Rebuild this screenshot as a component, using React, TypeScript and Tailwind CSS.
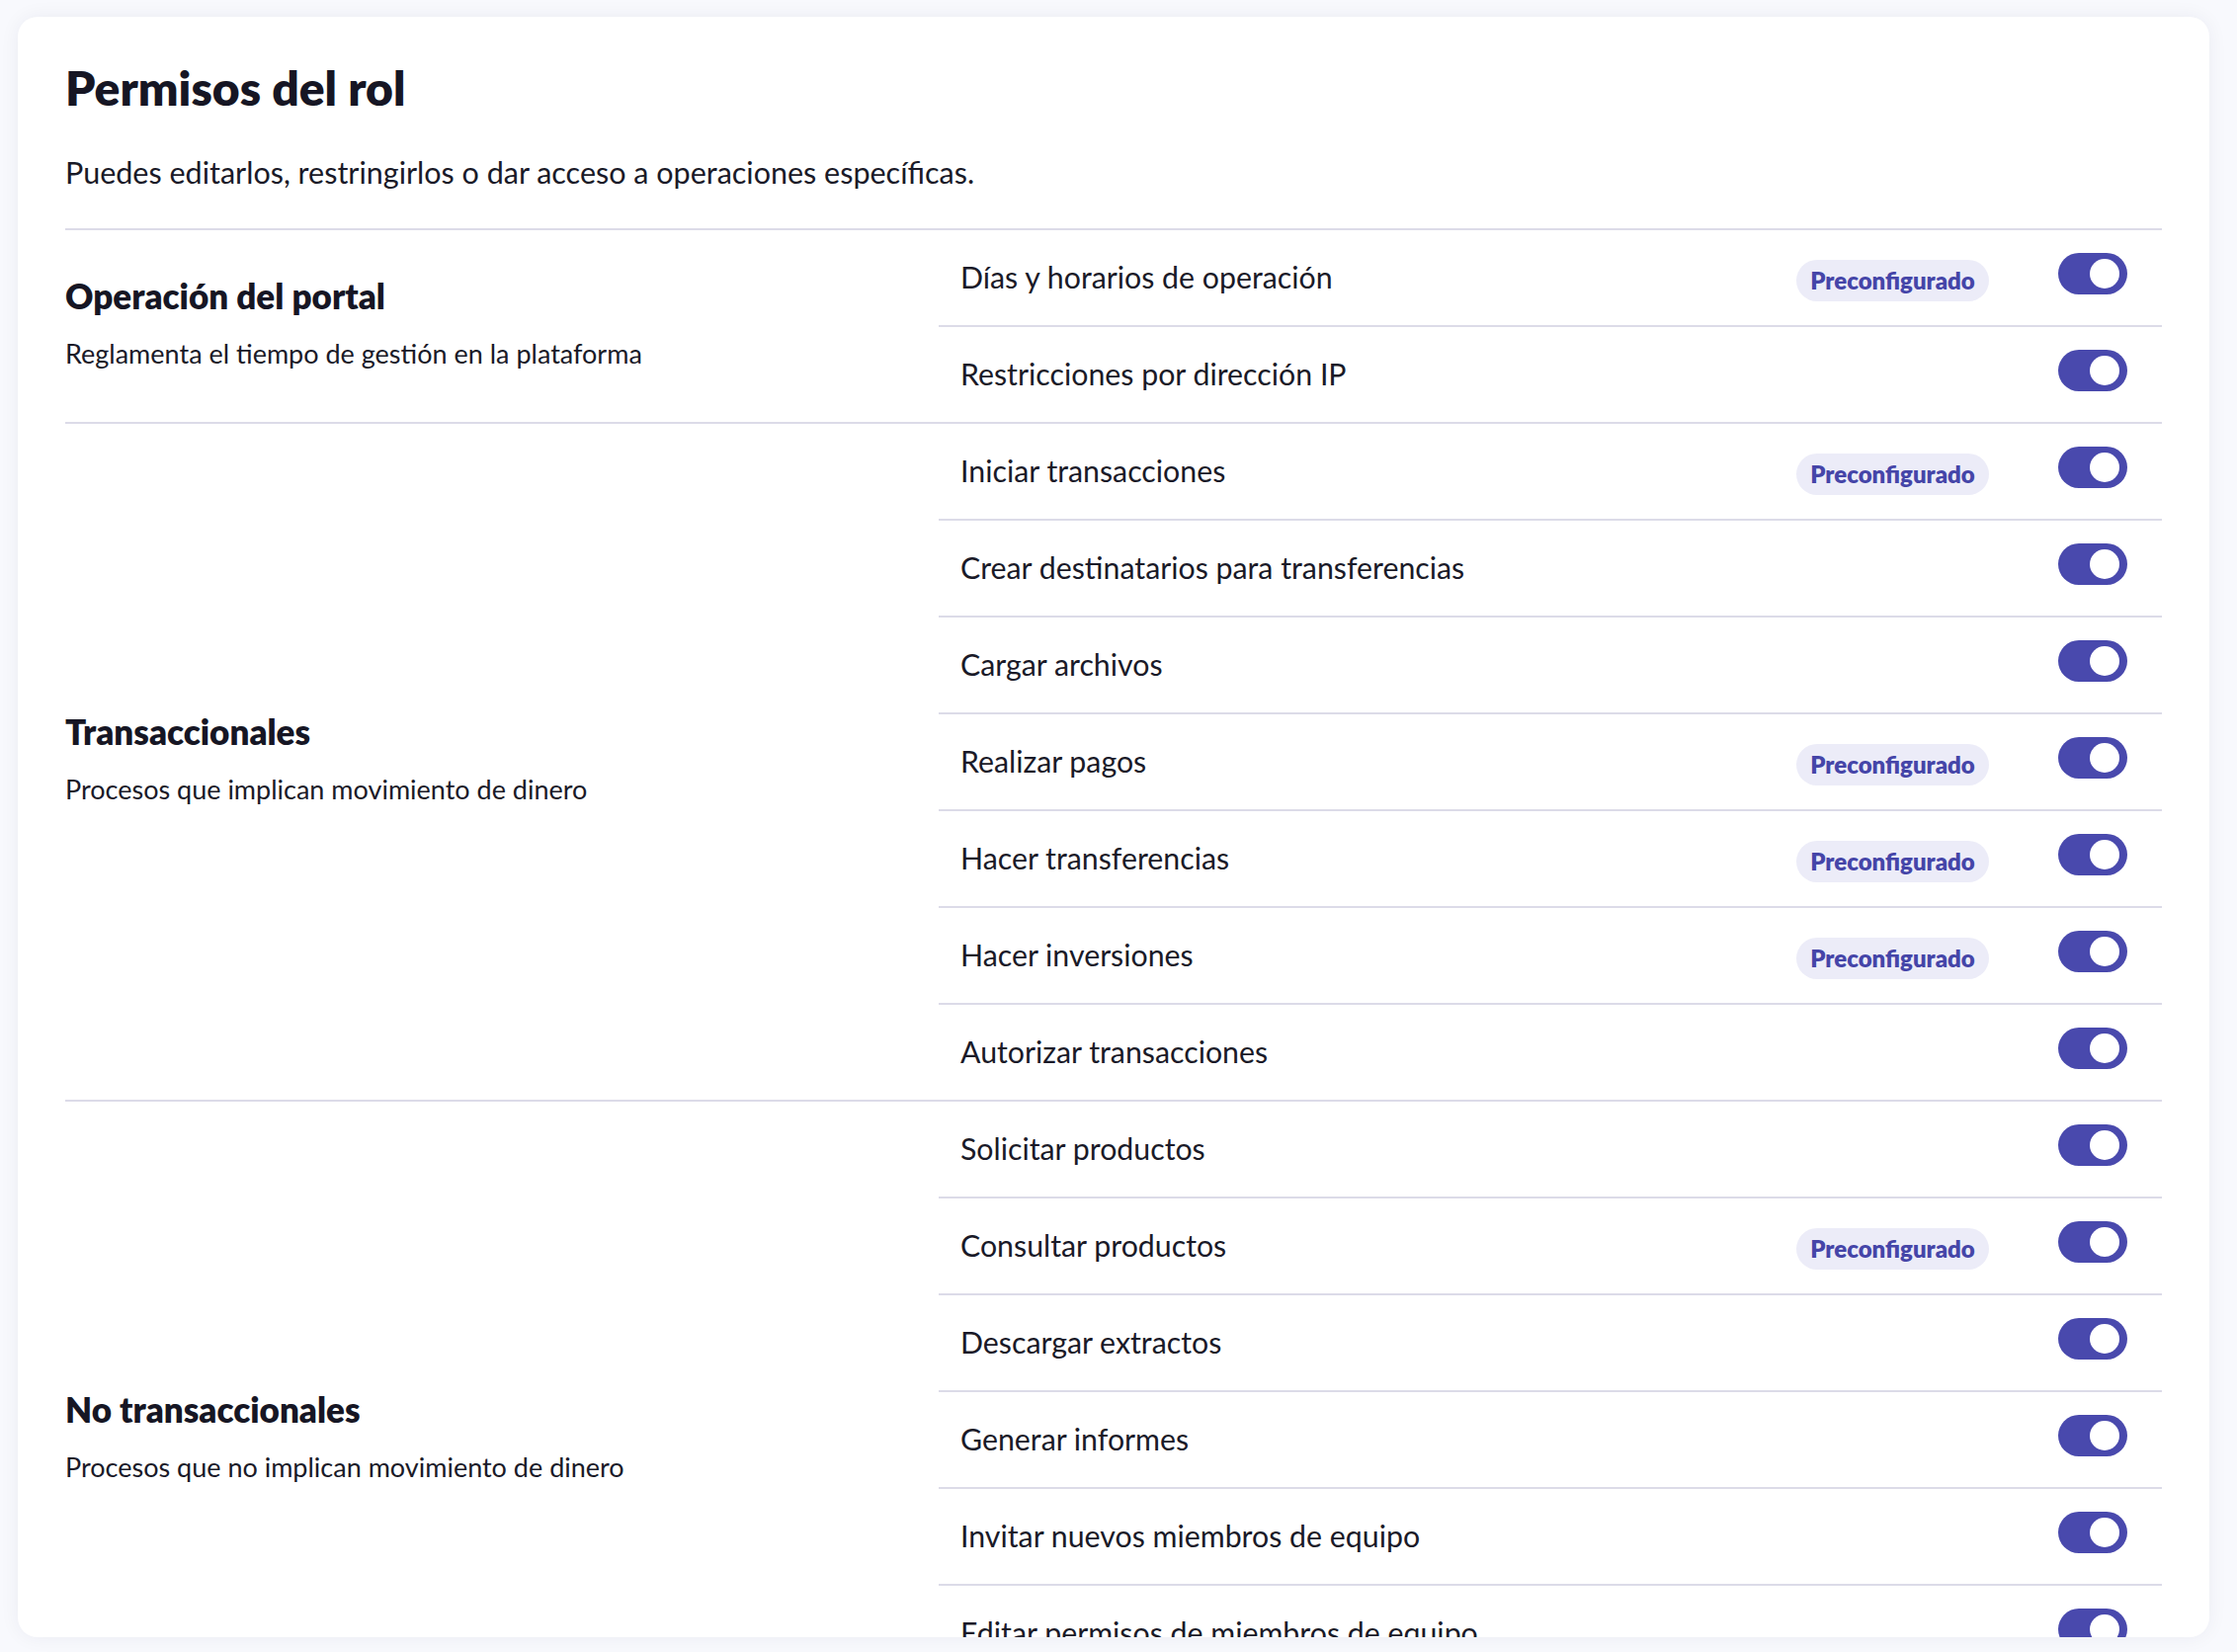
import React from "react";

type Row = { label: string; preset?: boolean };
type Section = { title: string; desc: string; rows: Row[] };

const sections: Section[] = [
  {
    title: "Operación del portal",
    desc: "Reglamenta el tiempo de gestión en la plataforma",
    rows: [
      { label: "Días y horarios de operación", preset: true },
      { label: "Restricciones por dirección IP" },
    ],
  },
  {
    title: "Transaccionales",
    desc: "Procesos que implican movimiento de dinero",
    rows: [
      { label: "Iniciar transacciones", preset: true },
      { label: "Crear destinatarios para transferencias" },
      { label: "Cargar archivos" },
      { label: "Realizar pagos", preset: true },
      { label: "Hacer transferencias", preset: true },
      { label: "Hacer inversiones", preset: true },
      { label: "Autorizar transacciones" },
    ],
  },
  {
    title: "No transaccionales",
    desc: "Procesos que no implican movimiento de dinero",
    rows: [
      { label: "Solicitar productos" },
      { label: "Consultar productos", preset: true },
      { label: "Descargar extractos" },
      { label: "Generar informes" },
      { label: "Invitar nuevos miembros de equipo" },
      { label: "Editar permisos de miembros de equipo" },
      { label: "Gestionar roles del equipo" },
    ],
  },
];

function Toggle() {
  return (
    <div className="relative mb-[9px] mr-[35px] h-[42px] w-[70px] shrink-0 rounded-full bg-[#4949ad]">
      <div className="absolute right-[8px] top-[6px] h-[30px] w-[30px] rounded-full bg-white" />
    </div>
  );
}

function Badge() {
  return (
    <span className="mr-[70px] mt-[5px] flex h-[42px] w-[195px] items-center justify-center rounded-full bg-[#ececf8] text-[24px] font-extrabold text-[#4545a8]">
      Preconfigurado
    </span>
  );
}

export default function App() {
  return (
    <div
      className="h-screen overflow-hidden bg-[#f8f9fd] pb-[15px] pl-[18px] pr-[28px] pt-[17px] text-[#1a1a28]"
      style={{ fontFamily: "Lato, 'Noto Sans', sans-serif" }}
    >
      <div className="h-full overflow-hidden rounded-[20px] bg-white px-[48px] shadow-[0_0_20px_rgba(20,20,60,0.06)]">
        <h1 className="pt-[44px] text-[48px] font-extrabold leading-[56px] text-[#161624]">Permisos del rol</h1>
        <p className="mt-[37px] text-[30.5px] leading-[40px]">
          Puedes editarlos, restringirlos o dar acceso a operaciones específicas.
        </p>
        <div className="mt-[37px] border-t-2 border-[#dcdbe8]">
          {sections.map((s) => (
            <div key={s.title} className="flex border-b-2 border-[#dcdbe8]">
              <div className="flex w-[884px] shrink-0 flex-col justify-center pb-[9px]">
                <h2 className="text-[35px] font-extrabold leading-[44px] text-[#161624]">{s.title}</h2>
                <p className="mt-[20px] text-[27px] leading-[34px]">{s.desc}</p>
              </div>
              <div className="flex-1">
                {s.rows.map((r, i) => (
                  <div
                    key={r.label}
                    className={
                      i < s.rows.length - 1
                        ? "flex h-[98px] items-center border-b-2 border-[#dcdbe8] pl-[22px]"
                        : "flex h-[96px] items-center pl-[22px]"
                    }
                  >
                    <span className="flex-1 text-[30.3px]">{r.label}</span>
                    {r.preset ? <Badge /> : null}
                    <Toggle />
                  </div>
                ))}
              </div>
            </div>
          ))}
        </div>
      </div>
    </div>
  );
}
